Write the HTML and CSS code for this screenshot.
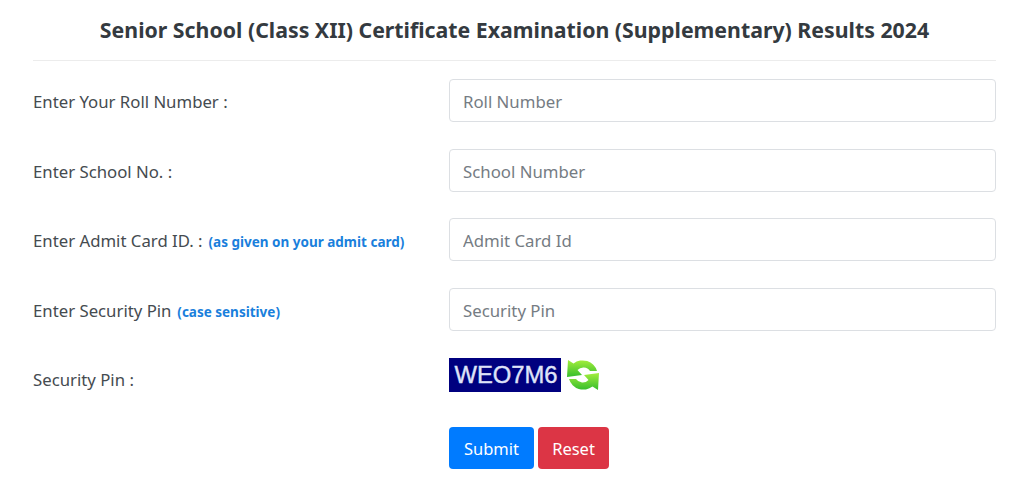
FILE: index.html
```html
<!DOCTYPE html>
<html lang="en">
<head>
    <meta charset="UTF-8">
    <meta name="viewport" content="width=device-width, initial-scale=1.0">
    <title>Results 2024</title>
    <link rel="stylesheet" href="styles.css">
</head>
<body>
    <div class="result-container">
        <h2 class="title">Senior School (Class XII) Certificate Examination (Supplementary) Results 2024</h2>
        <form class="result-form">
            <div class="form-row">
                <label class="field-label" for="roll">Enter Your Roll Number :</label>
                <input type="text" id="roll" placeholder="Roll Number">
            </div>
            <div class="form-row">
                <label class="field-label" for="school">Enter School No. :</label>
                <input type="text" id="school" placeholder="School Number">
            </div>
            <div class="form-row">
                <label class="field-label" for="admit">Enter Admit Card ID. : <small class="hint">(as given on your admit card)</small></label>
                <input type="text" id="admit" placeholder="Admit Card Id">
            </div>
            <div class="form-row">
                <label class="field-label" for="pin">Enter Security Pin <small class="hint">(case sensitive)</small></label>
                <input type="text" id="pin" placeholder="Security Pin">
            </div>
            <div class="form-row captcha-row">
                <span class="field-label">Security Pin :</span>
                <div class="captcha">
                    <span class="captcha-code">WEO7M6</span>
                    <svg class="refresh" viewBox="0 0 36 36" width="36" height="36" aria-label="Refresh">
                        <defs>
                            <linearGradient id="refreshGreen" x1="0" y1="0" x2="0" y2="1">
                                <stop offset="0" stop-color="#a4ee3c"/>
                                <stop offset="1" stop-color="#35bd2c"/>
                            </linearGradient>
                        </defs>
                        <path fill="url(#refreshGreen)" d="M32 14 A15 15 0 0 0 8.500 6.500 L3 3 L2 20 L17 18 L12.500 13 A8 8 0 0 1 25 14 Z"/>
                        <path fill="url(#refreshGreen)" d="M4 22 A15 15 0 0 0 27.500 29.500 L33 33 L34 16 L19 18 L23.500 23 A8 8 0 0 1 11 22 Z"/>
                    </svg>
                </div>
            </div>
            <div class="form-row button-row">
                <span></span>
                <div class="buttons">
                    <button class="btn btn-submit" type="submit">Submit</button>
                    <button class="btn btn-reset" type="reset">Reset</button>
                </div>
            </div>
        </form>
    </div>
</body>
</html>
```

FILE: styles.css
```css
body {
    margin: 0;
    background: #fff;
    color: #343a40;
    font-family: "Noto Sans", "Open Sans", sans-serif;
}
.result-container {
    padding: 0 28px 0 33px;
}
.title {
    margin: 0;
    height: 60px;
    line-height: 60px;
    border-bottom: 1px solid #ececec;
    text-align: center;
    font-size: 21.3px;
    font-weight: 700;
    color: #343a40;
    white-space: nowrap;
}
.result-form {
    padding-top: 18px;
}
.form-row {
    display: grid;
    grid-template-columns: 416px 1fr;
    align-items: center;
    height: 43px;
    margin-bottom: 26.5px;
}
.field-label {
    padding-top: 2px;
    font-size: 16.75px;
    color: #454b50;
}
.hint {
    margin-left: 1.5px;
    font-size: 13.5px;
    font-weight: 700;
    color: #1a7fdc;
}
input {
    width: 100%;
    height: 43px;
    padding: 2px 13px 0;
    border: 1px solid #dcdfe3;
    border-radius: 4px;
    box-sizing: border-box;
    font-family: inherit;
    font-size: 16.8px;
    color: #495057;
}
input::placeholder {
    color: #757c83;
    opacity: 1;
}
.captcha {
    display: flex;
    align-items: center;
    gap: 4px;
    margin-top: -8px;
}
.captcha-code {
    width: 110px;
    height: 34px;
    padding-left: 2px;
    line-height: 34px;
    background: #00007f;
    color: #dfe3f8;
    font-family: "Liberation Sans", Arial, sans-serif;
    font-size: 23.8px;
    -webkit-text-stroke: 0.4px #dfe3f8;
    text-align: center;
    white-space: nowrap;
}
.button-row {
    height: 42px;
    margin: 0;
}
.buttons {
    display: flex;
    gap: 4px;
}
.btn {
    height: 42px;
    padding: 2px 0 0;
    border: none;
    border-radius: 4px;
    color: #fff;
    font-family: inherit;
    font-size: 16.5px;
    cursor: pointer;
}
.btn-submit {
    width: 85px;
    background: #007bff;
}
.btn-reset {
    width: 71px;
    background: #dc3545;
}
```
